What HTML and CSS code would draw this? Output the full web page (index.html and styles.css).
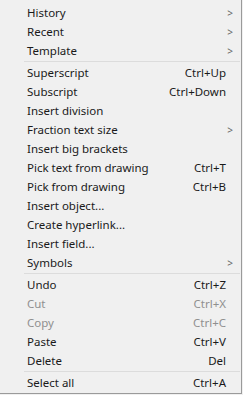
FILE: index.html
```html
<!DOCTYPE html>
<html lang="en">
<head>
    <meta charset="UTF-8">
    <title>Context menu</title>
    <link rel="stylesheet" href="styles.css">
</head>
<body>
    <div class="menu">
        <div class="item"><span class="label">History</span><span class="arrow">&gt;</span></div>
        <div class="item"><span class="label">Recent</span><span class="arrow">&gt;</span></div>
        <div class="item"><span class="label">Template</span><span class="arrow">&gt;</span></div>
        <div class="sep"></div>
        <div class="item"><span class="label">Superscript</span><span class="key">Ctrl+Up</span></div>
        <div class="item"><span class="label">Subscript</span><span class="key">Ctrl+Down</span></div>
        <div class="item"><span class="label">Insert division</span></div>
        <div class="item"><span class="label">Fraction text size</span><span class="arrow">&gt;</span></div>
        <div class="item"><span class="label">Insert big brackets</span></div>
        <div class="item"><span class="label">Pick text from drawing</span><span class="key">Ctrl+T</span></div>
        <div class="item"><span class="label">Pick from drawing</span><span class="key">Ctrl+B</span></div>
        <div class="item"><span class="label">Insert object...</span></div>
        <div class="item"><span class="label">Create hyperlink...</span></div>
        <div class="item"><span class="label">Insert field...</span></div>
        <div class="item"><span class="label">Symbols</span><span class="arrow">&gt;</span></div>
        <div class="sep"></div>
        <div class="item"><span class="label">Undo</span><span class="key">Ctrl+Z</span></div>
        <div class="item disabled"><span class="label">Cut</span><span class="key">Ctrl+X</span></div>
        <div class="item disabled"><span class="label">Copy</span><span class="key">Ctrl+C</span></div>
        <div class="item"><span class="label">Paste</span><span class="key">Ctrl+V</span></div>
        <div class="item"><span class="label">Delete</span><span class="key">Del</span></div>
        <div class="sep"></div>
        <div class="item"><span class="label">Select all</span><span class="key">Ctrl+A</span></div>
    </div>
</body>
</html>
```

FILE: styles.css
```css
html, body {
    margin: 0;
    padding: 0;
    background: #f0f0f0;
}
.menu {
    width: 242px;
    height: 394px;
    box-sizing: border-box;
    padding: 3px 0 2px 0;
    background: #f0f0f0;
    border-right: 1px solid #9a9a9a;
    border-bottom: 1px solid #9a9a9a;
    font-family: "Noto Sans", sans-serif;
    font-size: 11.5px;
    color: #1a1a1a;
}
.item {
    display: flex;
    align-items: center;
    height: 19px;
    padding-left: 27px;
    padding-right: 15px;
}
.label {
    flex: 1;
    white-space: nowrap;
}
.key {
    white-space: nowrap;
}
.arrow {
    font-size: 10px;
    color: #666;
    margin-right: -7px;
}
.disabled {
    color: #8f8f8f;
}
.sep {
    height: 1px;
    margin: 1px 1px 1px 24px;
    background: #dcdcdc;
}
```
